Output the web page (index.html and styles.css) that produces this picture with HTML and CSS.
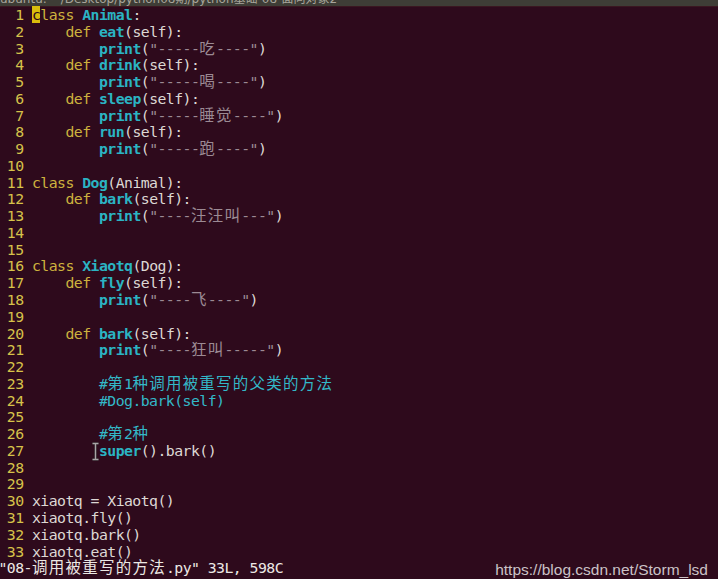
FILE: index.html
```html
<!DOCTYPE html>
<html lang="zh-CN">
<head>
    <meta charset="UTF-8">
    <title>08-调用被重写的方法.py - vim</title>
    <link rel="stylesheet" href="styles.css">
</head>
<body>
    <!-- window title bar, mostly scrolled off the top -->
    <div class="titlebar"><span>ubuntu: ~/Desktop/python08期/python基础-08-面向对象2</span></div>

    <div class="editor">
        <div class="line"><span class="nr">1</span><span class="cur">c</span><span class="k">lass</span> <span class="f">Animal</span>:</div>
        <div class="line"><span class="nr">2</span>    <span class="k">def</span> <span class="f">eat</span>(self):</div>
        <div class="line"><span class="nr">3</span>        <span class="f">print</span>(<span class="s">"-----<span class="w">吃</span>----"</span>)</div>
        <div class="line"><span class="nr">4</span>    <span class="k">def</span> <span class="f">drink</span>(self):</div>
        <div class="line"><span class="nr">5</span>        <span class="f">print</span>(<span class="s">"-----<span class="w">喝</span>----"</span>)</div>
        <div class="line"><span class="nr">6</span>    <span class="k">def</span> <span class="f">sleep</span>(self):</div>
        <div class="line"><span class="nr">7</span>        <span class="f">print</span>(<span class="s">"-----<span class="w">睡觉</span>----"</span>)</div>
        <div class="line"><span class="nr">8</span>    <span class="k">def</span> <span class="f">run</span>(self):</div>
        <div class="line"><span class="nr">9</span>        <span class="f">print</span>(<span class="s">"-----<span class="w">跑</span>----"</span>)</div>
        <div class="line"><span class="nr">10</span></div>
        <div class="line"><span class="nr">11</span><span class="k">class</span> <span class="f">Dog</span>(Animal):</div>
        <div class="line"><span class="nr">12</span>    <span class="k">def</span> <span class="f">bark</span>(self):</div>
        <div class="line"><span class="nr">13</span>        <span class="f">print</span>(<span class="s">"----<span class="w">汪汪叫</span>---"</span>)</div>
        <div class="line"><span class="nr">14</span></div>
        <div class="line"><span class="nr">15</span></div>
        <div class="line"><span class="nr">16</span><span class="k">class</span> <span class="f">Xiaotq</span>(Dog):</div>
        <div class="line"><span class="nr">17</span>    <span class="k">def</span> <span class="f">fly</span>(self):</div>
        <div class="line"><span class="nr">18</span>        <span class="f">print</span>(<span class="s">"----<span class="w">飞</span>----"</span>)</div>
        <div class="line"><span class="nr">19</span></div>
        <div class="line"><span class="nr">20</span>    <span class="k">def</span> <span class="f">bark</span>(self):</div>
        <div class="line"><span class="nr">21</span>        <span class="f">print</span>(<span class="s">"----<span class="w">狂叫</span>-----"</span>)</div>
        <div class="line"><span class="nr">22</span></div>
        <div class="line"><span class="nr">23</span>        <span class="c">#<span class="w">第</span>1<span class="w">种调用被重写的父类的方法</span></span></div>
        <div class="line"><span class="nr">24</span>        <span class="c">#Dog.bark(self)</span></div>
        <div class="line"><span class="nr">25</span></div>
        <div class="line"><span class="nr">26</span>        <span class="c">#<span class="w">第</span>2<span class="w">种</span></span></div>
        <div class="line"><span class="nr">27</span>        <span class="f">super</span>().bark()</div>
        <div class="line"><span class="nr">28</span></div>
        <div class="line"><span class="nr">29</span></div>
        <div class="line"><span class="nr">30</span>xiaotq = Xiaotq()</div>
        <div class="line"><span class="nr">31</span>xiaotq.fly()</div>
        <div class="line"><span class="nr">32</span>xiaotq.bark()</div>
        <div class="line"><span class="nr">33</span>xiaotq.eat()</div>
        <div class="line status">"08-<span class="w">调用被重写的方法</span>.py" 33L, 598C</div>
    </div>

    <!-- mouse pointer (I-beam) over line 27 -->
    <svg class="ibeam" width="9" height="19" viewBox="0 0 9 19">
        <path d="M1.5 1.5 H7.5 M4.5 1.5 V17.5 M1.5 17.5 H7.5" stroke="#2a1a22" stroke-width="3" fill="none"/>
        <path d="M1.5 1.5 H7.5 M4.5 1.5 V17.5 M1.5 17.5 H7.5" stroke="#a9a4a6" stroke-width="1.4" fill="none"/>
    </svg>

    <div class="mark">https://blog.csdn.net/Storm_lsd</div>
</body>
</html>
```

FILE: styles.css
```css
body {
    margin: 0;
    height: 100vh;
    overflow: hidden;
    position: relative;
    background: #2e0a1c;
    color: #ddd8d4;
    font-family: "DejaVu Sans Mono", "Noto Sans CJK SC", monospace;
    font-size: 14.8px;
    letter-spacing: -0.54px; /* 8.37px cells like the terminal */
}

/* title bar cut off by the screenshot */
.titlebar {
    height: 6px;
    background: #3e3d36;
    border-bottom: 1px solid #3a1620;
    overflow: hidden;
    font-family: "DejaVu Sans", "Noto Sans CJK SC", sans-serif;
    font-size: 12px;
    line-height: 14px;
    letter-spacing: 0;
    color: #a8a59b;
}

.titlebar span {
    display: block;
    margin-top: -8px;
    white-space: nowrap;
}

/* vim buffer */
.editor {
    margin-left: -1.5px;
}

.line {
    height: 16.78px;
    line-height: 16.78px;
    white-space: pre;
}

.nr {
    display: inline-block;
    width: 25.1px;
    margin-right: 8.37px;
    text-align: right;
    color: #d6c24a;
}

.k {
    color: #cdb23e;
}

.f {
    color: #2bb4c3;
    font-weight: bold;
}

.s {
    color: #9c8a94;
}

.c {
    color: #33b8c8;
}

/* double-width cells for CJK text */
.w {
    font-size: 15.5px;
    letter-spacing: 1.24px;
}

.cur {
    background: #d9bd0c;
    color: #2e0a1c;
}

.status {
    color: #ece8e4;
}

.ibeam {
    position: absolute;
    left: 91px;
    top: 442px;
}

.mark {
    position: absolute;
    right: 10px;
    bottom: 0;
    line-height: 18px;
    font-family: "Liberation Sans", Arial, sans-serif;
    font-size: 15.5px;
    letter-spacing: 0;
    color: #cbc2c7;
}
```
